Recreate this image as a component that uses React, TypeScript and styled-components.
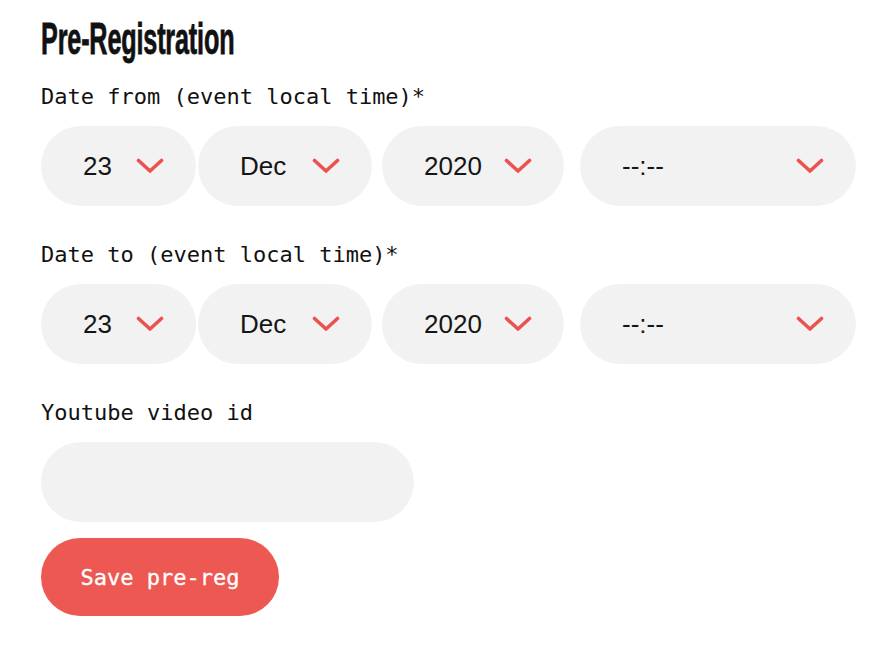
import React from "react";
import styled, { createGlobalStyle } from "styled-components";

const GlobalStyle = createGlobalStyle`
  html, body { margin: 0; padding: 0; background: #ffffff; }
  body { font-family: "Liberation Sans", Arial, sans-serif; }
  * { box-sizing: border-box; }
`;

const Page = styled.div`
  padding: 16px 0 0 41px;
  display: flex;
  flex-direction: column;
  align-items: flex-start;
`;

const Heading = styled.h1`
  margin: 0 0 22px 0;
  font-family: "Liberation Sans", Arial, sans-serif;
  font-weight: 700;
  font-size: 45px;
  line-height: 45px;
  color: #111111;
  letter-spacing: -0.3px;
  -webkit-text-stroke: 0.8px #111111;
  transform: scaleX(0.56);
  transform-origin: left center;
  white-space: nowrap;
`;

const Label = styled.label<{ $gapTop?: number }>`
  display: block;
  margin: ${(p) => p.$gapTop ?? 0}px 0 16px 0;
  padding-top: 1px;
  font-family: "DejaVu Sans Mono", "Liberation Mono", monospace;
  font-size: 22px;
  line-height: 26px;
  color: #111111;
  white-space: nowrap;
`;

const Row = styled.div`
  display: flex;
  align-items: center;
`;

const Pill = styled.div<{ $width: number; $before: number }>`
  width: ${(p) => p.$width}px;
  margin-left: ${(p) => p.$before}px;
  height: 80px;
  border-radius: 40px;
  background: #f2f2f2;
  padding: 0 32px 0 42px;
  display: flex;
  align-items: center;
  justify-content: space-between;
`;

const Value = styled.span`
  font-family: "Liberation Sans", Arial, sans-serif;
  font-size: 26px;
  color: #151515;
  line-height: 1;
`;

const TextInput = styled.div`
  width: 373px;
  height: 80px;
  border-radius: 40px;
  background: #f2f2f2;
`;

const SaveButton = styled.button`
  margin-top: 16px;
  width: 238px;
  height: 78px;
  border: none;
  border-radius: 39px;
  background: #ed5853;
  color: #ffffff;
  font-family: "DejaVu Sans Mono", "Liberation Mono", monospace;
  font-size: 22px;
  -webkit-text-stroke: 0.3px #ffffff;
  padding: 0;
  cursor: pointer;
`;

const Chevron = () => (
  <svg width="28" height="16" viewBox="0 0 28 16" fill="none">
    <path
      d="M2.5 2.5 L14 13 L25.5 2.5"
      stroke="#ea534e"
      strokeWidth="3.6"
      strokeLinecap="round"
      strokeLinejoin="round"
    />
  </svg>
);

const pills = [
  { value: "23", width: 155, before: 0 },
  { value: "Dec", width: 174, before: 2 },
  { value: "2020", width: 182, before: 10 },
  { value: "--:--", width: 276, before: 16 },
];

const DateRow = () => (
  <Row>
    {pills.map((p) => (
      <Pill key={p.value} $width={p.width} $before={p.before}>
        <Value>{p.value}</Value>
        <Chevron />
      </Pill>
    ))}
  </Row>
);

export default function App() {
  return (
    <>
      <GlobalStyle />
      <Page>
        <Heading>Pre-Registration</Heading>
        <Label>Date from (event local time)*</Label>
        <DateRow />
        <Label $gapTop={35}>Date to (event local time)*</Label>
        <DateRow />
        <Label $gapTop={35}>Youtube video id</Label>
        <TextInput />
        <SaveButton>Save pre-reg</SaveButton>
      </Page>
    </>
  );
}
